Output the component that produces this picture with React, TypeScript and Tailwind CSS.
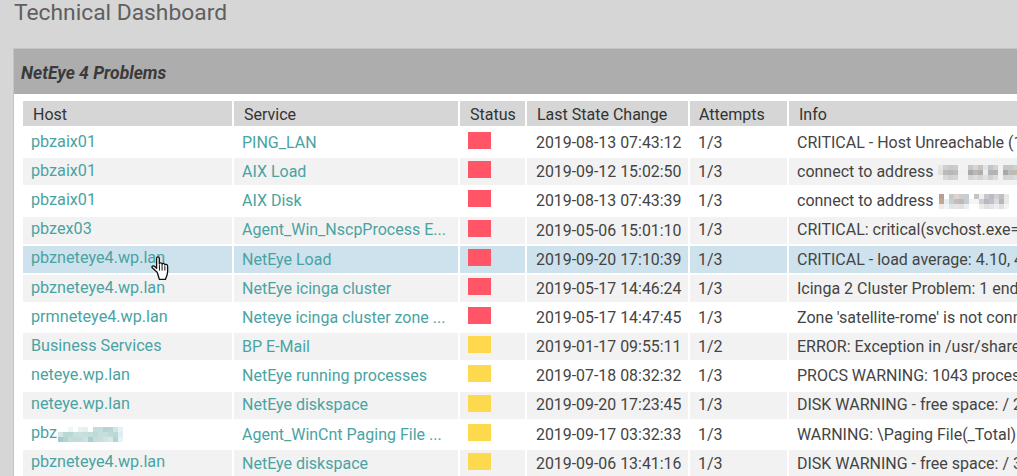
const rows: [string, string, string, string, string, string][] = [
  ["pbzaix01", "PING_LAN", "r", "2019-08-13 07:43:12", "1/3", "CRITICAL - Host Unreachable (10.62.5.21)"],
  ["pbzaix01", "AIX Load", "r", "2019-09-12 15:02:50", "1/3", "connect to address"],
  ["pbzaix01", "AIX Disk", "r", "2019-08-13 07:43:39", "1/3", "connect to address"],
  ["pbzex03", "Agent_Win_NscpProcess E...", "r", "2019-05-06 15:01:10", "1/3", "CRITICAL: critical(svchost.exe=stopped)"],
  ["pbzneteye4.wp.lan", "NetEye Load", "r", "2019-09-20 17:10:39", "1/3", "CRITICAL - load average: 4.10, 4.05, 4.01"],
  ["pbzneteye4.wp.lan", "NetEye icinga cluster", "r", "2019-05-17 14:46:24", "1/3", "Icinga 2 Cluster Problem: 1 endpoints"],
  ["prmneteye4.wp.lan", "Neteye icinga cluster zone ...", "r", "2019-05-17 14:47:45", "1/3", "Zone 'satellite-rome' is not connected"],
  ["Business Services", "BP E-Mail", "y", "2019-01-17 09:55:11", "1/2", "ERROR: Exception in /usr/share/icinga"],
  ["neteye.wp.lan", "NetEye running processes", "y", "2019-07-18 08:32:32", "1/3", "PROCS WARNING: 1043 processes"],
  ["neteye.wp.lan", "NetEye diskspace", "y", "2019-09-20 17:23:45", "1/3", "DISK WARNING - free space: / 2048 MB"],
  ["pbz", "Agent_WinCnt Paging File ...", "y", "2019-09-17 03:32:33", "1/3", "WARNING: \\Paging File(_Total)"],
  ["pbzneteye4.wp.lan", "NetEye diskspace", "y", "2019-09-06 13:41:16", "1/3", "DISK WARNING - free space: / 3072 MB"],
];

const mosaicA = [
  ["#e6e6e6", "#cfcfcf", "#c9c9c9", "#cbcbcb", "#f2f2f2", "#f2f2f2", "#c6c6c6", "#d8d4d0", "#c4c4c4", "#dde4ec", "#c4c4c4", "#d2d2d2", "#f2f2f2", "#c6c6c6", "#c8c8c8", "#cfcfcf"],
  ["#e0e0e0", "#bbbbbb", "#b8b8b8", "#bcbcbc", "#f0f0f0", "#f0f0f0", "#a8a8ae", "#b8b8b8", "#b4aeaa", "#e8eef4", "#b4b4b4", "#b0b4b8", "#f2f2f2", "#a8a8a8", "#bcbcbc", "#c8b8a8"],
  ["#f2f2f2", "#d8d8d8", "#d0d0d0", "#d4d4d4", "#f2f2f2", "#f2f2f2", "#d6d6d6", "#dcdcdc", "#d4d4d4", "#e0e0e0", "#d0d0d0", "#dcdcdc", "#f2f2f2", "#d4d4d4", "#d6d6d6", "#dcdcdc"],
];
const mosaicB = [
  ["#b8a090", "#ffffff", "#c8c8c8", "#dcd4d0", "#d0ccc8", "#c8ccd0", "#ffffff", "#c8c4c4", "#f0f0f0", "#c8c8c8", "#b8bcc4", "#d0d0d0", "#c0c0c0", "#e8e8e8", "#ffffff"],
  ["#c0a898", "#e8eef0", "#c4d0d0", "#c4bcc0", "#bcb8bc", "#c4ccd4", "#f4f4f4", "#f4f4f4", "#c8d0d8", "#b8b8c0", "#c0c0c8", "#d8dce0", "#b4b8b8", "#e8e8e8", "#ffffff"],
  ["#f4e8e4", "#f0f4f8", "#e4e4e4", "#e8e4e4", "#e0e0e0", "#eceff0", "#ffffff", "#ffffff", "#ececec", "#e0e0e0", "#e4e4e4", "#eeeeee", "#e0e0e0", "#f4f4f4", "#ffffff"],
];
const mosaicC = [
  ["#ffffff", "#ffffff", "#eef6f6", "#ffffff", "#e8f2f2", "#e4f0f0", "#ffffff", "#c4dcda", "#c4dcda", "#b4d4d2", "#b8d6d4", "#cfe4e4", "#e4f2f4"],
  ["#d4e6e4", "#b8d8d6", "#bcd8d6", "#c8e0dc", "#c8e0de", "#c4dedc", "#c4dcda", "#bedad8", "#c8dede", "#c6dedc", "#bedad8", "#bcd8d6", "#dceef2"],
  ["#a0cccc", "#b4d4d2", "#c4dcda", "#c0dcd8", "#c4dcda", "#cee2e0", "#a8d0d0", "#c8dede", "#c8dede", "#d0e4e2", "#d8e8e8", "#b4d4d4", "#e4f4f8"],
];

function Mosaic({ data, className }: { data: string[][]; className: string }) {
  return (
    <span className={`flex flex-col ${className}`}>
      {data.map((line, y) => (
        <span key={y} className="flex">
          {line.map((c, x) => (
            <span key={x} className="block h-[5px] w-[5px]" style={{ background: c }} />
          ))}
        </span>
      ))}
    </span>
  );
}

function Hand() {
  return (
    <svg className="absolute left-[150px] top-[253px]" width="22" height="28.6" viewBox="0 0 20 26">
      <path
        d="M6.5 17.5 L2 13.5 C1 12 3 11 4.5 12.5 L6 14 V5 C6 3 8.5 3 8.5 5 V10 C8.5 8.5 11 8.5 11 10.5 C11 9 13.5 9 13.5 11 C13.5 10 16 10 16 12 V17 C16 20 15 22 14 24 H8.5 C8 22 7 19 6.5 17.5 Z"
        fill="#fff"
        stroke="#111"
        strokeWidth="1.2"
        strokeLinejoin="round"
      />
      <path d="M8.6 11v5M11 11v5M13.5 12v4" stroke="#111" strokeWidth="0.9" fill="none" />
    </svg>
  );
}

export default function App() {
  return (
    <div className="relative h-[476px] w-[1017px] overflow-hidden bg-[#d6d6d6] font-['Roboto',sans-serif]">
      <div className="h-[48px] pl-[14px] pt-[1px]">
        <h1 className="whitespace-nowrap text-[22.8px] leading-[24px] text-[#5f5f5f]">Technical Dashboard</h1>
      </div>
      <div className="ml-[13px] h-[428px] overflow-hidden border-l border-t border-[#c4c4c4] bg-white">
        <div className="flex h-[45px] items-center bg-[#adadad] pl-[7px] pt-[3px] text-[17.5px] font-bold italic text-[#3a3a3a]">
          NetEye 4 Problems
        </div>
        <div className="pl-[9px] pt-[7px]">
          <div className="flex h-[25px] w-[1100px] gap-[2px] text-[16px] leading-[27px] text-[#333]">
            <div className="w-[209px] bg-[#d6d6d6] pl-[10px]">Host</div>
            <div className="w-[224px] bg-[#d6d6d6] pl-[10px]">Service</div>
            <div className="w-[65px] bg-[#d6d6d6] pl-[10px]">Status</div>
            <div className="w-[161px] bg-[#d6d6d6] pl-[10px]">Last State Change</div>
            <div className="w-[97px] bg-[#d6d6d6] pl-[9px]">Attempts</div>
            <div className="w-[300px] bg-[#d6d6d6] pl-[10px]">Info</div>
          </div>
          <div className="mt-[3.13px] flex flex-col gap-[2px]">
            {rows.map((r, i) => {
              const bg = i === 4 ? "bg-[#cde2ed]" : i % 2 === 1 ? "bg-[#f2f2f2]" : "bg-white";
              return (
                <div key={i} className="flex h-[27.17px] w-[1100px] shrink-0 gap-[2px] text-[16px]">
                  <div className={`flex h-full w-[209px] items-center whitespace-nowrap pb-[1.6px] pl-[8px] text-[16.2px] text-[#4aa3a3] ${bg}`}>
                    {r[0]}
                    {i === 10 && <Mosaic data={mosaicC} className="ml-[1px] mt-[2px]" />}
                  </div>
                  <div className={`flex h-full w-[224px] items-center whitespace-nowrap pl-[8px] pt-[0.6px] text-[#4aa3a3] ${bg}`}>{r[1]}</div>
                  <div className={`h-full w-[65px] pl-[8px] pt-[3px] ${bg}`}>
                    <span className={`block h-[17px] w-[23px] ${r[2] === "r" ? "bg-[#ff5566]" : "bg-[#ffd94d]"}`} />
                  </div>
                  <div className={`flex h-full w-[161px] items-center whitespace-nowrap pl-[9px] pt-[0.6px] text-[15.9px] text-[#444] ${bg}`}>{r[3]}</div>
                  <div className={`flex h-full w-[97px] items-center pl-[8px] pt-[0.6px] text-[#444] ${bg}`}>{r[4]}</div>
                  <div className={`flex h-full w-[300px] items-center whitespace-nowrap pl-[8px] pt-[0.6px] text-[#444] ${bg}`}>
                    {r[5]}
                    {i === 1 && <Mosaic data={mosaicA} className="ml-[5px]" />}
                    {i === 2 && <Mosaic data={mosaicB} className="ml-[6px]" />}
                  </div>
                </div>
              );
            })}
          </div>
        </div>
      </div>
      <Hand />
    </div>
  );
}
